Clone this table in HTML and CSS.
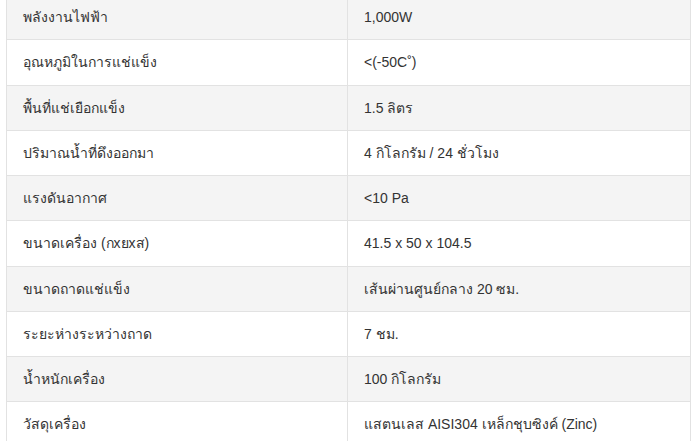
FILE: index.html
```html
<!DOCTYPE html>
<html lang="th">
<head>
<meta charset="utf-8">
<link rel="stylesheet" href="styles.css">
</head>
<body>
<table class="spec">
<tbody>
<tr><td>พลังงานไฟฟ้า</td><td>1,000W</td></tr>
<tr><td>อุณหภูมิในการแช่แข็ง</td><td>&lt;(-50C˚)</td></tr>
<tr><td>พื้นที่แช่เยือกแข็ง</td><td>1.5 ลิตร</td></tr>
<tr><td>ปริมาณน้ำที่ดึงออกมา</td><td>4 กิโลกรัม / 24 ชั่วโมง</td></tr>
<tr><td>แรงดันอากาศ</td><td>&lt;10 Pa</td></tr>
<tr><td>ขนาดเครื่อง (กxยxส)</td><td>41.5 x 50 x 104.5</td></tr>
<tr><td>ขนาดถาดแช่แข็ง</td><td>เส้นผ่านศูนย์กลาง 20 ซม.</td></tr>
<tr><td>ระยะห่างระหว่างถาด</td><td>7 ชม.</td></tr>
<tr><td>น้ำหนักเครื่อง</td><td>100 กิโลกรัม</td></tr>
<tr><td>วัสดุเครื่อง</td><td>แสตนเลส AISI304 เหล็กชุบซิงค์ (Zinc)</td></tr>
</tbody>
</table>
</body>
</html>
```
FILE: styles.css
```css
html, body {
  margin: 0;
  padding: 0;
  background: #ffffff;
  overflow: hidden;
}
.spec {
  margin: -6px 0 0 6px;
  width: 685px;
  border-collapse: collapse;
  font-family: "Liberation Sans", "Noto Sans", "DejaVu Sans", sans-serif;
  font-size: 14px;
  color: #333333;
  table-layout: fixed;
}
.spec td {
  border: 1px solid #e2e2e2;
  height: 45.25px;
  padding: 0 16px;
  box-sizing: border-box;
  vertical-align: middle;
}
.spec td:first-child {
  width: 341px;
}
.spec tr:nth-child(odd) td {
  background: #f4f4f4;
}
.spec tr:nth-child(even) td {
  background: #ffffff;
}
```
